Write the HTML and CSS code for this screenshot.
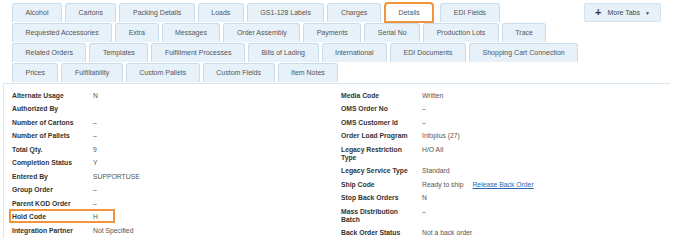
FILE: index.html
```html
<!DOCTYPE html>
<html lang="en">
<head>
    <meta charset="UTF-8">
    <title>Order Details</title>
    <link rel="stylesheet" href="styles.css">
</head>
<body>
    <div class="page">
        <div class="tabbar">
            <div class="tab-rows">
                <div class="tab-row">
                    <span class="tab">Alcohol</span>
                    <span class="tab">Cartons</span>
                    <span class="tab">Packing Details</span>
                    <span class="tab">Loads</span>
                    <span class="tab">GS1-128 Labels</span>
                    <span class="tab">Charges</span>
                    <span class="tab active">Details</span>
                    <span class="tab">EDI Fields</span>
                </div>
                <div class="tab-row">
                    <span class="tab">Requested Accessories</span>
                    <span class="tab">Extra</span>
                    <span class="tab">Messages</span>
                    <span class="tab">Order Assembly</span>
                    <span class="tab">Payments</span>
                    <span class="tab">Serial No</span>
                    <span class="tab">Production Lots</span>
                    <span class="tab">Trace</span>
                </div>
                <div class="tab-row">
                    <span class="tab">Related Orders</span>
                    <span class="tab">Templates</span>
                    <span class="tab">Fulfillment Processes</span>
                    <span class="tab">Bills of Lading</span>
                    <span class="tab">International</span>
                    <span class="tab">EDI Documents</span>
                    <span class="tab">Shopping Cart Connection</span>
                </div>
                <div class="tab-row">
                    <span class="tab">Prices</span>
                    <span class="tab">Fulfillability</span>
                    <span class="tab">Custom Pallets</span>
                    <span class="tab">Custom Fields</span>
                    <span class="tab">Item Notes</span>
                </div>
            </div>
            <button class="more-btn"><span class="plus">+</span>More Tabs<span class="caret">&#9660;</span></button>
        </div>

        <div class="panel">
            <div class="details">
                <!-- left column -->
                <div class="col">
                    <div class="row"><span class="label">Alternate Usage</span><span class="value">N</span></div>
                    <div class="row"><span class="label">Authorized By</span><span class="value"></span></div>
                    <div class="row"><span class="label">Number of Cartons</span><span class="value">&ndash;</span></div>
                    <div class="row"><span class="label">Number of Pallets</span><span class="value">&ndash;</span></div>
                    <div class="row"><span class="label">Total Qty.</span><span class="value">9</span></div>
                    <div class="row"><span class="label">Completion Status</span><span class="value">Y</span></div>
                    <div class="row"><span class="label">Entered By</span><span class="value">SUPPORTUSE</span></div>
                    <div class="row"><span class="label">Group Order</span><span class="value">&ndash;</span></div>
                    <div class="row"><span class="label">Parent KOD Order</span><span class="value">&ndash;</span></div>
                    <div class="row marked"><span class="label">Hold Code</span><span class="value">H</span></div>
                    <div class="row"><span class="label">Integration Partner</span><span class="value">Not Specified</span></div>
                </div>
                <!-- right column -->
                <div class="col">
                    <div class="row"><span class="label">Media Code</span><span class="value">Written</span></div>
                    <div class="row"><span class="label">OMS Order No</span><span class="value">&ndash;</span></div>
                    <div class="row"><span class="label">OMS Customer Id</span><span class="value">&ndash;</span></div>
                    <div class="row"><span class="label">Order Load Program</span><span class="value">Infoplus (27)</span></div>
                    <div class="row"><span class="label">Legacy Restriction Type</span><span class="value">H/O All</span></div>
                    <div class="row"><span class="label">Legacy Service Type</span><span class="value">Standard</span></div>
                    <div class="row"><span class="label">Ship Code</span><span class="value">Ready to ship <a href="#" class="link">Release Back Order</a></span></div>
                    <div class="row"><span class="label">Stop Back Orders</span><span class="value">N</span></div>
                    <div class="row"><span class="label">Mass Distribution Batch</span><span class="value">&ndash;</span></div>
                    <div class="row"><span class="label">Back Order Status</span><span class="value">Not a back order</span></div>
                </div>
            </div>
            <div class="scrollbar"></div>
        </div>
    </div>
</body>
</html>
```

FILE: styles.css
```css
:root {
    --tab-bg: #e7f1fa;
    --tab-border: #c9dcec;
    --orange: #f0953a;
    --label: #333;
    --value: #555;
}

body {
    margin: 0;
    background: #fff;
    font-family: 'Liberation Sans', Arial, sans-serif;
}

.page {
    padding: 3px 0 0 3px;
    width: 667px;
}

/* tabs */
.tabbar {
    display: flex;
    justify-content: space-between;
    align-items: flex-start;
    padding: 0 9px;
}

.tab-rows {
    display: flex;
    flex-direction: column;
}

.tab-row {
    display: flex;
    gap: 3px;
}

.tab {
    box-sizing: border-box;
    height: 19px;
    line-height: 18px;
    margin-bottom: 1px;
    padding: 0 12.5px;
    background: var(--tab-bg);
    border: 1px solid var(--tab-border);
    border-bottom: none;
    border-radius: 3px 3px 0 0;
    font-size: 7px;
    color: #555;
    white-space: nowrap;
    text-align: center;
}

.tab.active {
    background: #fff;
    outline: 2px solid var(--orange);
    outline-offset: -1px;
    margin-left: 1px;
    margin-right: 4px;
}

.more-btn {
    height: 19px;
    width: 77px;
    padding: 0;
    background: var(--tab-bg);
    border: 1px solid #d3e3f0;
    border-radius: 2px;
    font-family: inherit;
    font-size: 7px;
    color: #444;
    display: flex;
    align-items: center;
    justify-content: center;
}

.more-btn .plus {
    font-size: 11px;
    font-weight: bold;
    color: #333;
    margin-right: 6px;
    line-height: 1;
}

.more-btn .caret {
    font-size: 5px;
    margin-left: 5px;
    color: #444;
}

/* detail panel */
.panel {
    display: flex;
}

.details {
    flex: 1;
    height: 149px;
    border-top: 1px solid #d9e7f2;
    border-left: 1px solid #d9e7f2;
    padding: 5px 0 0 8px;
    display: flex;
}

.col {
    width: 329px;
}

.row {
    display: flex;
    padding: 2.75px 0;
    line-height: 8px;
    font-size: 6.8px;
    position: relative;
}

.label {
    width: 75px;
    margin-right: 6px;
    font-weight: bold;
    color: var(--label);
}

.value {
    color: var(--value);
}

.link {
    color: #2767b0;
    margin-left: 7px;
}

.row.marked::after {
    content: '';
    position: absolute;
    left: -3px;
    top: -2px;
    width: 102px;
    height: 10px;
    border: 2px solid var(--orange);
}

.scrollbar {
    width: 6px;
    height: 153px;
    margin: 0 1px 0 1px;
    background: #d9d9d9;
}
```
